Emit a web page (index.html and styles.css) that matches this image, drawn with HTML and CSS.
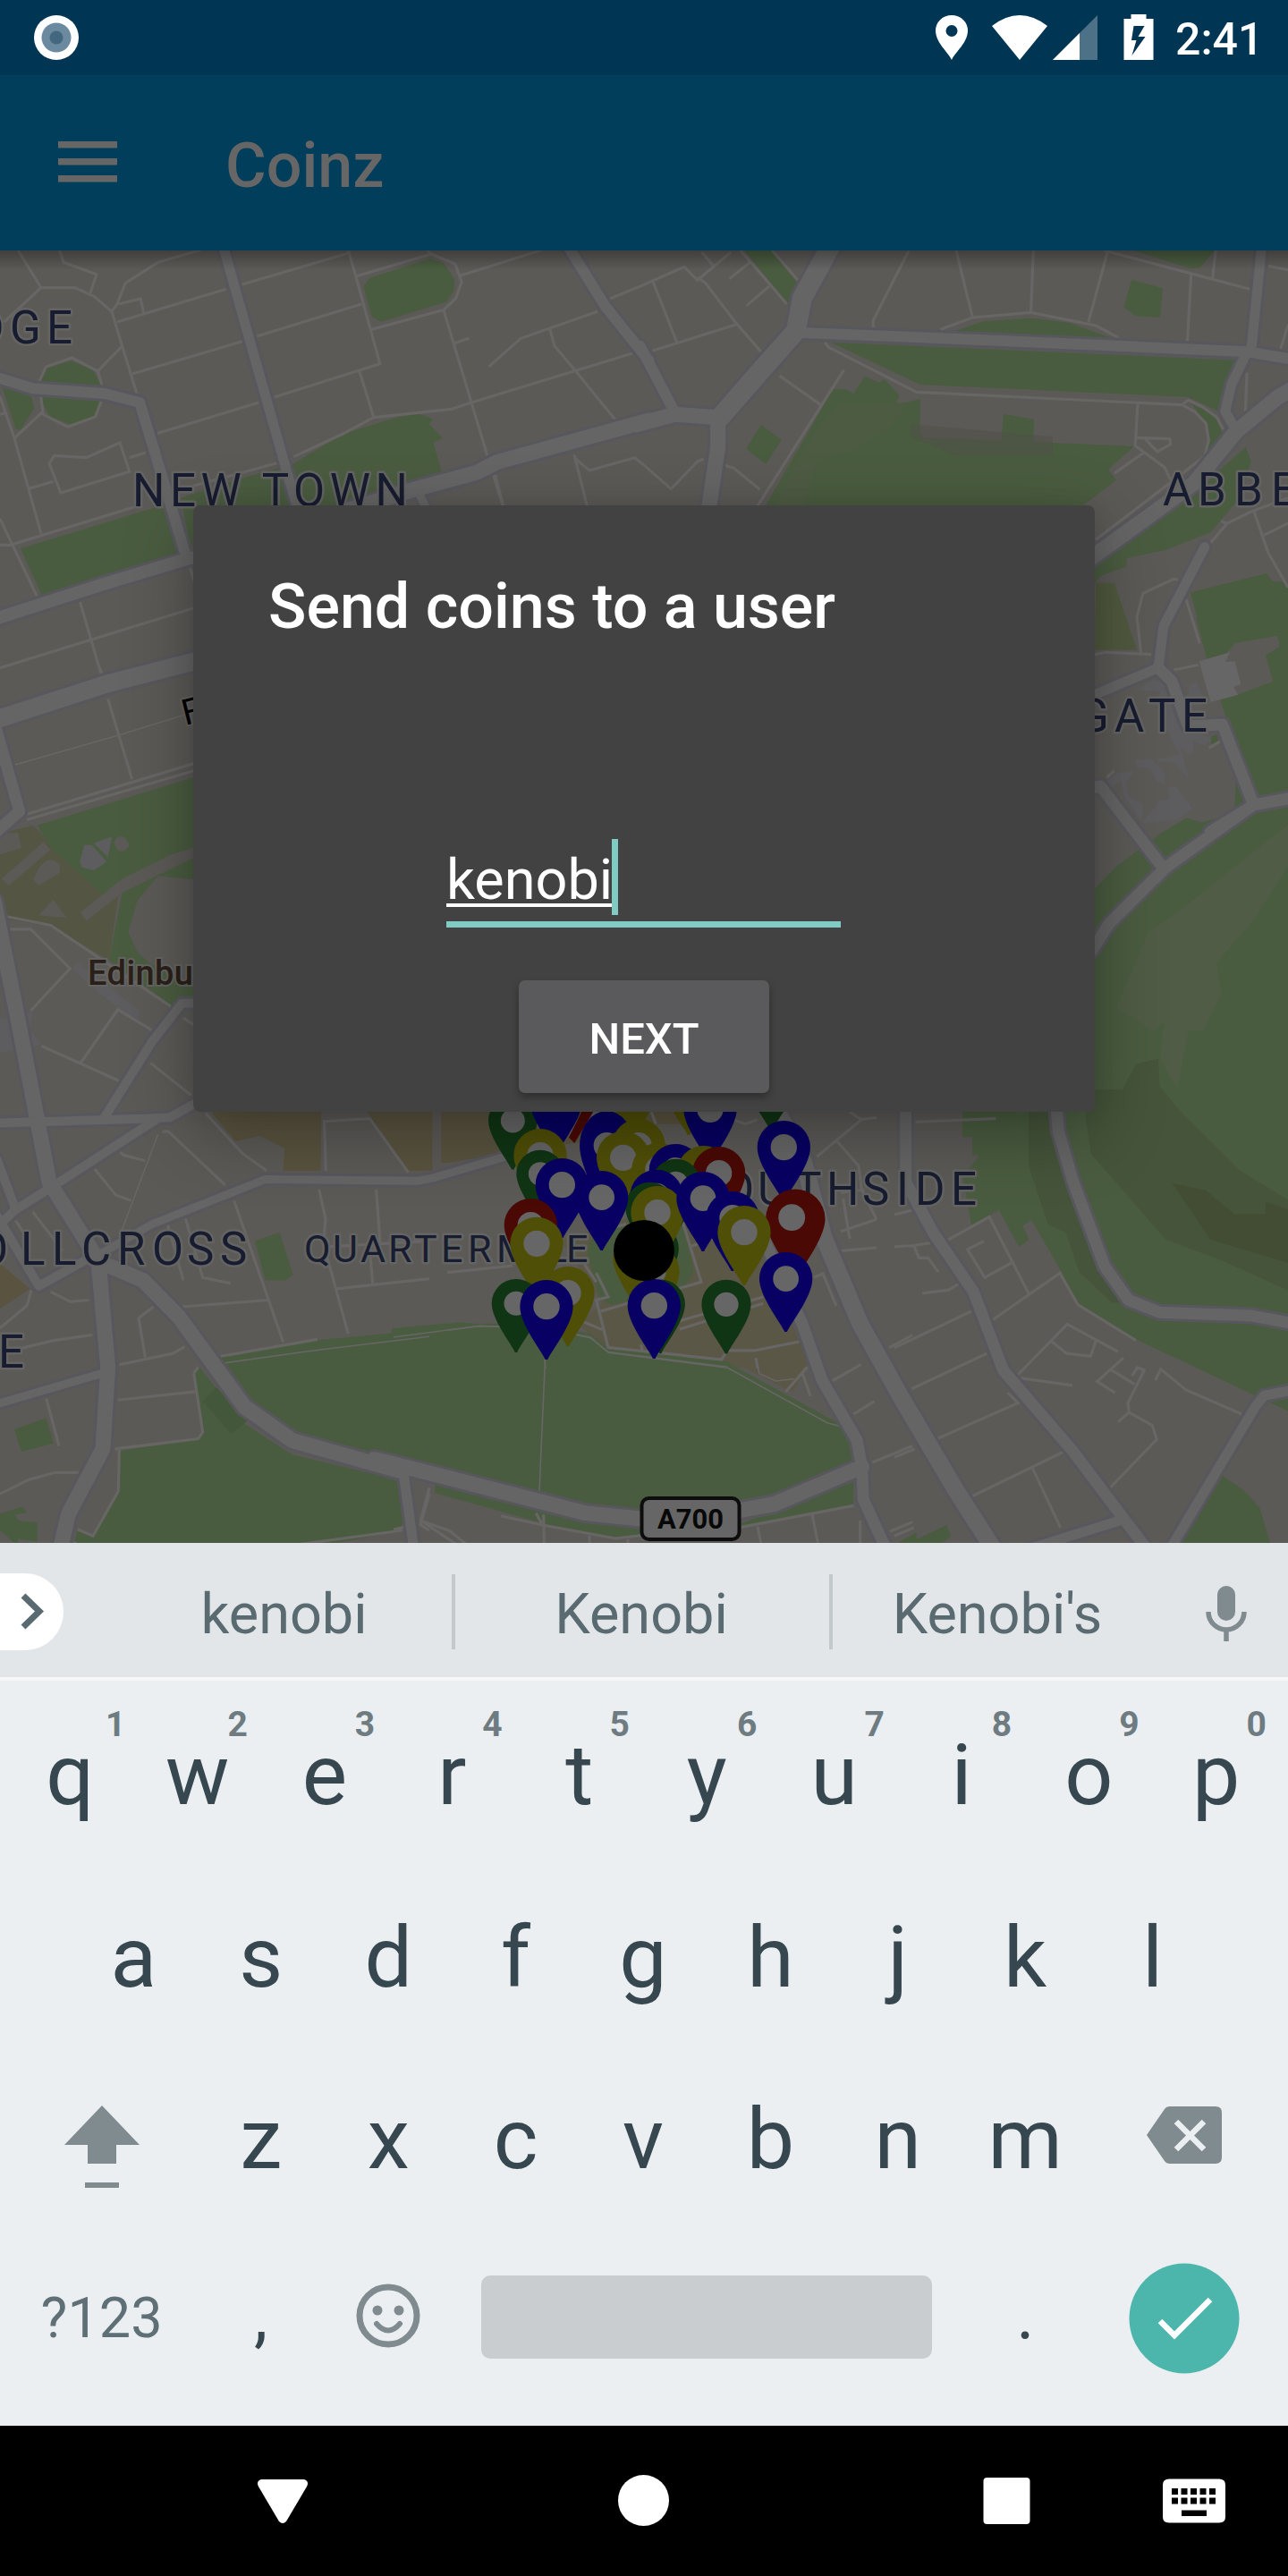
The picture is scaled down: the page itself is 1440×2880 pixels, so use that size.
FILE: index.html
```html
<!DOCTYPE html>
<html lang="en">
<head>
<meta charset="utf-8">
<title>Coinz</title>
<link rel="stylesheet" href="styles.css">
</head>
<body>
<div class="phone">
  <header class="status">
    <svg width="50" height="50" viewBox="0 0 50 50"><circle cx="25" cy="25" r="25" fill="#fff"/><circle cx="25" cy="25" r="16.5" fill="#6b8a9f"/><circle cx="25" cy="25" r="7.5" fill="#43677f"/></svg>
    <div class="status-right">
      <svg width="230" height="54" viewBox="1046 15 230 54" fill="#fff">
        <path fill-rule="evenodd" d="M1064 67C1060 58 1046 48 1046 34A18 17 0 0 1 1082 34C1082 48 1068 58 1064 67ZM1064 28a6.5 6.5 0 1 0 0 13a6.5 6.5 0 0 0 0-13Z"/>
        <path d="M1109 29Q1140 5 1171 29L1140 67Z"/>
        <path d="M1227 17V67H1177Z" opacity=".3"/><path d="M1207 37V67H1177Z"/>
        <path fill-rule="evenodd" d="M1265 16h17v5h8v46h-33V21h8ZM1268 29L1265.500 45H1271L1266 62L1281 41H1273L1280 29Z" transform="translate(-.5)"/>
      </svg>
      <span class="clock">2:41</span>
    </div>
  </header>
  <div class="appbar">
    <svg width="66" height="48" viewBox="0 0 66 48" fill="#666"><path d="M0 1h66v7.500H0zM0 20h66v7.500H0zM0 39h66v7.500H0z"/></svg>
    <h1>Coinz</h1>
  </div>
  <main class="stage">
    <svg class="map" width="1440" height="1445" viewBox="0 280 1440 1445">
      <defs>
        <g id="roads">
          <g transform="translate(0 270) scale(.4592 .3333)">
            <path class="w11" d="M540 0L700 780L730 920"/>
            <path class="w12" d="M-10 455L80 493L255 510L340 540L395 790L455 1065"/>
            <path class="w14" d="M-10 1265L250 1150L455 1065L490 1055"/>
            <path class="w12" d="M1380 10L1475 220L1580 400"/>
            <path class="w17" d="M850 900L1000 835L1160 775L1210 740L1580 600"/>
            <path class="w9" d="M1022 850L1050 930"/>
          </g>
          <g transform="translate(720 270) scale(.4592 .3333)">
            <path class="w22" d="M460 0L425 90L385 190L370 300L280 440L185 590"/>
            <path class="w17" d="M-20 615L75 580L180 590L180 690L155 920"/>
            <path class="w12" d="M370 305L820 330L1470 370L1590 398"/>
            <path class="w11" d="M1505 0L1478 370M1465 380L1430 480L1415 570L1440 630"/>
            <path class="w17" d="M1590 485L1545 520L1440 640L1340 810L1080 1070"/>
            <path class="w12" d="M-10 350L70 560"/>
            <path class="w11" d="M1365 1025L1265 1290L1252 1430L1080 1530"/>
          </g>
          <g transform="translate(1200 700) scale(.3333)">
            <path class="w13" d="M285 140L330 185L385 335L500 330L605 600L740 575M605 600L460 690"/>
          </g>
          <g transform="translate(1000 750) scale(.3333 .6281)">
            <path class="w13" d="M1200 240L910 350L720 450L660 500M900 350L690 205L650 210"/>
            <path class="w13" d="M540 760L550 820L600 910L705 1060L785 1120L890 1142L1200 1148L1340 1162"/>
            <path class="w13" d="M38 700L38 910L130 1000L265 1105L365 1245L600 1390L770 1510L900 1600"/>
            <path class="w11" d="M380 1575L770 1510"/>
            <path class="w11" d="M900 1585L1210 1310L1240 1290L1340 1280"/>
          </g>
          <g transform="translate(0 750) scale(.3333 .6281)">
            <path class="w20" d="M-20 88L365 22L660 -18"/>
            <path class="w13" d="M-20 90L65 250L-10 285"/>
            <path class="w17" d="M-20 410L60 620L165 910L330 1050L362 1240L345 1385L230 1500L190 1590"/>
            <path class="w10" d="M-10 805L500 797L570 795L660 768M170 920L520 800M170 920L50 960L-10 990M-10 870L50 955"/>
            <path class="w10" d="M350 795L510 660L610 592L660 592M-10 970L130 1095L300 1045"/>
            <path class="w9" d="M330 1040L510 985L890 905L1400 908L1450 903L1790 850L2100 760"/>
            <path class="w17" d="M370 1060L480 1085L600 1150L820 1310L980 1370L1340 1424"/>
            <path class="w9" d="M345 1250L-10 1305"/>
          </g>
          <g transform="translate(440 1480) scale(.37 .3333)">
            <path class="w17" d="M-60 455L0 470L580 635L750 655L900 655L1150 605L1415 480"/>
            <path class="w11" d="M30 500L62 760"/>
            <path class="w13" d="M1030 -500L1235 0L1295 190L1400 390L1415 480L1420 590L1490 760"/>
            <path class="w19" d="M1120 -800L1240 -540L1300 -290L1410 0L1530 240L1700 560L1850 820"/>
          </g>
        </g>
        <path id="pin" d="M-4 178C-15 150 -89 60 -89 0A89 89 0 1 1 89 0C89 60 15 150 4 178Z"/>
        <linearGradient id="barShade" x2="0" y2="1"><stop stop-opacity=".3"/><stop offset="1" stop-opacity="0"/></linearGradient>
      </defs>
      <rect y="280" width="1440" height="1445" fill="#5c5a57"/>

      <g class="park">
        <g transform="translate(0 270) scale(.4592 .3333)">
          <path d="M900 122L1048 58L1080 72L1107 125L1105 165L1088 202L928 270L905 252L885 150ZM172 400L225 430L245 480V545L230 588L172 613L122 588L95 520L100 465L115 425ZM5 488L75 515L83 560L50 632L38 628ZM50 1030L395 885L435 1050L102 1188ZM440 860L600 790L715 745L835 645L970 588L1020 578L1055 595L1045 612L1078 660L1055 675L1078 785L850 900H480V1050L460 1000Z"/>
        </g>
        <g transform="translate(720 270) scale(.4592 .3333)">
          <path d="M245 30H310L372 135L350 210ZM1190 30H1390L1352 90H1330ZM1187 128L1263 157L1257 255L1197 250L1168 220ZM755 302L825 268L940 257L1035 272L1140 325ZM455 338L1440 398L1415 470L1400 570L1325 522L672 480ZM1335 545L1390 580L1413 660L1360 750L1375 670L1365 610ZM285 615L335 665L297 747L248 695ZM460 495H490L510 510L538 452L572 473L585 462L622 515L612 548L672 528V640L680 657L870 668L875 578L950 597L948 672L1193 687L1130 765L1150 800L1055 900H290ZM1465 690L1478 740L1450 860L1380 975L1270 1035L1175 1062V1090L1115 1120L1080 1170V1110L1290 900ZM1330 1177L1517 1113L1530 1140L1580 1145V1520L1400 1510L1375 1395Z"/>
          <path fill="#50593f" d="M1100 1145H1145L1200 1370H1098Z"/>
          <path fill="#4e5b43" d="M470 550L410 655L350 800L320 885H390L420 740L520 690L600 620L640 540Z"/>
          <path fill="#505049" opacity=".55" d="M648 612L995 655V717H755L648 655Z"/>
        </g>
        <path d="M1337 690H1440V890L1404 900L1372 806L1350 740Z"/>
        <g transform="translate(1000 750) scale(.3333 .6281)">
          <path d="M660 395L740 350L820 318L890 290L980 262L1030 270L1140 255L1145 200L1200 230H1330V1320L1210 1290L810 1190L610 1125L560 1070L460 978L430 988L452 1013L417 1025L350 960L258 987L230 900L285 862H262L260 830H228V780H660ZM910 1570L1100 1432L1175 1460L1225 1490L1270 1570ZM0 1565L175 1520L190 1540L120 1570Z"/>
          <path fill="#505c45" d="M745 600L850 465L950 430L1245 305L1330 270V340L1245 410L1210 440L1080 520L1097 575L1035 640L985 640L950 745L890 690L905 625L870 642Z"/>
          <path fill="#45543a" d="M672 745H765L810 700L885 690L890 740L970 790L1160 890L1330 945V1105L1100 1050L910 1012L660 860L640 790ZM450 785V880L515 985L575 1000L620 1070L730 1125H770L700 1065L590 910L530 785Z"/>
          <path fill="#43492f" opacity=".6" d="M932 912L1045 925L1140 967H1245V945L1330 960V1055L1060 1012Z"/>
        </g>
        <g transform="translate(0 750) scale(.3333 .6281)">
          <path fill="#54543f" opacity=".8" d="M-5 290L110 275L345 395L400 390L365 515L170 455L0 440Z"/>
          <path d="M125 275L660 188V313L570 328L410 370L345 398L175 318ZM410 395L660 328V580L580 597L365 515ZM855 1015L938 1000L983 1075L958 1085H890ZM740 1222L1050 1192L1450 1172V1430L990 1370L840 1300ZM650 1250L670 1240L820 1340L980 1395L1335 1440L1350 1530L960 1570H240L260 1530L310 1540L400 1460L405 1388L668 1368L680 1355ZM48 1350L155 1330L180 1375L72 1390ZM0 1500L75 1488L90 1498L50 1502L60 1512L125 1516V1550L60 1545V1558L0 1530Z"/>
          <path fill="#5c5a57" d="M660 372L530 365L460 410L430 465L460 500L500 520L580 545L660 560ZM5 370L145 305L170 318L30 382ZM112 372Q150 320 200 345V360L130 382ZM270 430L345 398L660 315V330L410 395L290 445ZM-5 290L60 288L72 315L-5 328ZM130 435L178 407L225 440Z"/>
          <path fill="#43583a" d="M680 1300L725 1275L830 1335L775 1358Z"/>
          <path fill="#5d5d60" d="M268 340L283 310H308L358 340L315 355L275 350ZM315 307L375 295L362 332ZM240 530L262 520L468 605L455 625L325 570ZM0 620L112 605L100 640L140 665L0 680Z"/>
          <path fill="#5c5a57" d="M382 306Q405 280 435 310Q405 335 382 306Z"/>
          <path fill="#59533f" d="M700 780H1078L1075 890H950L955 850L870 828L790 838ZM1225 780H1450V890H1370ZM0 1055L100 1100L0 1135Z"/>
        </g>
        <g transform="translate(500 1220) scale(.3333)">
          <path fill="#59533f" d="M-20 60H960V95L860 110L600 110L450 170L0 240H-20Z"/>
          <path fill="#5b5747" d="M380 500L620 420L1020 460L1100 640L1210 910L1160 1010L1000 930L530 870L440 780L520 710Z"/>
          <path d="M480 500L560 450L790 440L827 605L800 650L550 718L510 690L470 540ZM-20 785L180 778L400 800L480 812L540 860L940 905L1000 960H-20Z"/>
        </g>
        <g transform="translate(440 1480) scale(.37 .3333)">
          <path d="M-5 15L200 -5L560 30L650 90L1010 130L1355 340L1395 455L1140 580L750 640L580 620L-5 455ZM-5 495L15 510L30 670L-5 678ZM125 540L440 620L580 660L750 685V708L670 715L520 690L125 568ZM1050 670L1390 530V605L1050 685ZM1515 740L1580 700V740Z"/>
        </g>
        <g transform="translate(1200 700) scale(.3333)">
          <path fill="#5c5a57" d="M543 57L685 32L692 68L645 98L670 185L540 235L460 255L422 118L510 95Z"/>
          <path fill="#666" d="M422 118L525 88L510 120L542 118L562 195L537 205L553 230L460 255Z"/>
          <path fill="#5d5d60" d="M210 215L270 180L300 190L350 330L410 350L465 380L440 400L400 385L405 425L385 430L360 405L390 520L345 460L265 450L355 430L310 340L290 220ZM385 235L388 200L415 185L430 235ZM112 520Q150 480 205 488L180 520L185 570L235 600L230 655L170 570L160 520L125 540ZM205 450L258 445L300 480L310 530L275 520L260 480L215 470ZM318 540L345 540L400 610L350 650L230 660L290 585L340 575L325 590Z"/>
          <path d="M463 370L480 362L490 388L462 402Z"/>
        </g>
      </g>

      <g class="minor">
        <g transform="translate(0 270) scale(.4592 .3333)">
          <path d="M35 10L100 155H182L230 185L272 235L335 520M145 30L155 70L235 110L218 180M100 155L10 270M490 28L385 70L305 140L285 210L272 235M288 210L342 192L350 240M285 270L550 160M588 145L850 38M320 445L590 335M625 318L880 210M668 522L925 410L865 110L848 30M380 645L630 540M875 435L910 590L1100 562L1148 540L1540 375M715 722L835 645L910 590M865 118L1050 42L1108 75L1124 135L1110 190L1080 230L905 295M1120 115L1320 28M1080 230L1188 725L1225 890M1105 342L1142 325M1190 420L1268 325L1455 235M1338 290L1350 350L1400 432L1498 598M1485 192L1568 145M298 350L238 435L175 390L112 420L95 470L105 580L165 622L232 588L248 530M238 435L248 480M105 570L35 660L0 520M35 660L100 980M72 828L130 805M315 725L355 708M120 745L132 718L210 725L292 675L315 772L148 843ZM0 580L12 575M0 1018H25L340 885M0 930L90 1190M470 820L710 730M195 1210L247 1455M0 1430L470 1230M463 1095L475 1150M1398 715L1430 890M1398 725L1435 768L1545 725L1568 750M1205 780L1225 885M1040 30L1050 42"/>
        </g>
        <g transform="translate(720 270) scale(.4592 .3333)">
          <path d="M0 145L98 85L130 130L212 35M140 35L168 80M22 135L82 345M20 367L225 278M130 120L150 140L225 275L285 370M235 30L348 210M312 30L375 130M208 125L258 70M250 215L305 150M645 30L558 265V290M760 30L800 255M948 30L942 238M722 295L800 255L942 238L1100 282L1155 322M1128 38L1082 270M1120 30L1475 160M1332 112L1323 335M1392 30L1384 125M1520 82L1568 95M1568 280L1550 360M440 338L450 355L663 505L1310 548L1340 570L1368 610L1375 665L1365 720L1290 800L1100 1000M1310 548L1325 532L1360 555L1395 590L1410 630M1202 545L1196 685L1268 758L1282 800M1217 708L1145 778M1198 658L1280 662L1282 680L1250 705L1220 662M330 450L430 548M487 430L275 890M190 748L218 760L282 832M0 750L66 830L130 738L145 730M1468 440L1464 580M1568 860L1480 905L1420 945L1380 1010M1405 938L1420 945M1485 905L1520 1045L1568 1160M1510 985L1568 945M1300 1135L1290 1132L1215 1180L1200 1260L1210 1380M1098 1385L1125 1378L1235 1385M1290 1437L1350 1420M1320 1200L1353 1348"/>
        </g>
        <g transform="translate(0 750) scale(.3333 .6281)">
          <path d="M335 -5L345 10M362 50L443 193M90 255L650 165M90 265L650 178M0 435L170 453L580 600M22 460H103L235 530L103 605M395 603L272 697M140 668L400 730M272 697L395 603L510 640M505 698L640 755M615 618L650 630M545 820H565L755 915M690 788L815 860L895 890M1093 890L1088 802L1240 797L1370 893M403 857L415 862L487 872M318 887L388 933L440 943M110 963L210 1032M52 978L98 1015M563 987L615 1085M622 975L680 1080L773 1090M785 943L950 1195M1070 923L1092 975L1085 1020L1168 1180M1262 923L1275 1020M1240 1030L1250 1090M1130 1100L1440 1082M1100 1025L1440 1015M515 1132L465 1152L487 1222M610 1132L900 1120M400 1235L580 1215L620 1203M395 1298L655 1283M170 1105L235 1123L298 1120M105 1103L90 1130L0 1170M0 1215L180 1192L310 1182M155 1295L198 1380M0 1465L95 1440L185 1427H270M650 1250L680 1355L665 1367L385 1385M400 1385L397 1460L312 1540L260 1528M740 1220L1065 1190M650 1250L665 1240M1440 1465L1410 1520L1440 1530M960 1558L1350 1530M250 1550L265 1570"/>
          <path class="hair" d="M0 175L395 115L640 75M395 1015L530 825M740 1233L1050 1210L1440 1185"/>
        </g>
        <g transform="translate(500 1220) scale(.3333)">
          <path d="M685 70L700 110M960 95L1000 110L1040 95M1350 70L1390 95L1305 165L1240 220M1390 95L1440 88M1305 165L1380 250L1390 330L1440 430M1320 340L1400 330M1320 470L1440 430M1328 360L1350 495M1320 535L1440 525M1230 625L1260 612L1305 720M790 440L852 640L515 738M500 610L540 690L500 700L540 860L920 900L940 870H1030L1180 840M780 770L1060 690M780 798L1060 712M460 775L520 800M500 640L460 580M600 445L520 470M820 520L900 490M0 608L220 585M1035 895L1042 930M650 850L655 870"/>
          <path class="hair" d="M0 802L105 788L300 790L480 825L540 875L940 925M327 900L330 930"/>
        </g>
        <g transform="translate(1000 750) scale(.3333 .6281)">
          <path d="M70 803L340 797M0 968L60 960M0 1025L65 1023L180 1013L318 972L450 1108M65 1023L82 1045H113L147 1070M300 1015L245 1030L303 1080L398 1052M93 1108L182 1102L230 1087M330 1155L555 1072L615 1128L810 1192M0 1205L258 1140M58 1278L310 1215M138 1368L415 1303L380 1285M0 1400L68 1385M230 1477L568 1390M462 1418L557 1525M410 1255L580 1163L750 1212M525 1193L578 1215L658 1220L677 1190M410 1258L597 1272M768 1223L680 1265L740 1285M723 1243L805 1270M797 1255L815 1240L838 1245L783 1303L787 1320L750 1337M787 1320L865 1343L880 1368L722 1455M875 1263L893 1243L978 1280L1165 1323M0 1540L65 1525M712 190L737 178M1055 137L1095 125"/>
        </g>
        <g transform="translate(440 1480) scale(.37 .3333)">
          <path d="M1320 195L1412 137M1390 303L1453 260M1447 465L1568 410M1498 80L1568 38M1500 697L1568 665M1185 228L1250 145M1235 165L1260 243M1050 682L1390 610M1100 680L1110 735M1265 640L1282 735M1410 660V735M108 550L82 660L170 695L220 740M82 660L190 740M325 645L450 675L670 720L750 710M430 635L450 675M453 640L455 735M592 710V735M708 722V735M0 690L30 683"/>
          <path class="hair" d="M0 45L260 7L320 10M555 38L595 47L650 97L1010 148L1310 332L1355 345M458 120L440 575M1095 115L1105 167L1155 192L1210 185"/>
        </g>
      </g>

      <use class="casing" href="#roads"/>
      <use class="surface" href="#roads"/>

      <g class="place">
        <text x="-29 11 52" y="384">DGE</text>
        <text x="148" y="566" textLength="308">NEW TOWN</text>
        <text x="1300 1339 1380 1421" y="565">ABBE</text>
        <text x="1205 1246 1284 1321" y="818">GATE</text>
        <text x="774 808 847 888 924 964 1002 1023 1063" y="1347">SOUTHSIDE</text>
        <text x="-26 23 58 91 131 170 209 246" y="1414">OLLCROSS</text>
        <text class="small" x="340 372 403 434 463 493 523 555 595 611 633" y="1411">QUARTERMILE</text>
        <text x="-2" y="1529">E</text>
      </g>
      <text class="castle" x="98" y="1101" textLength="118">Edinbu</text>
      <text class="street" transform="translate(207 811) rotate(-14)">F</text>
      <g><rect x="717.500" y="1675" width="109" height="46" rx="8" fill="#666" stroke="#0d0d0d" stroke-width="4"/><text class="shield" x="735" y="1708.500" textLength="74" lengthAdjust="spacingAndGlyphs">A700</text></g>

      <g class="pins" transform="translate(500 1220) scale(.3333)">
        <g class="g" transform="translate(220 99) scale(.92)"><use href="#pin"/><circle r="44"/></g>
        <g class="b" transform="translate(365 30)"><use href="#pin"/></g>
        <g class="r"><path d="M455 60H495L427 174L408 155Z"/></g>
        <g class="y" transform="translate(600 20)"><use href="#pin"/></g>
        <g class="y" transform="translate(810 -31)"><use href="#pin"/></g>
        <g class="g" transform="translate(1087 -35) scale(.93)"><use href="#pin"/></g>
        <g class="b" transform="translate(882 61)"><use href="#pin"/><circle r="44"/></g>
        <g class="b" transform="translate(1129 188)"><use href="#pin"/><circle r="44"/></g>
        <g class="y" transform="translate(312 215)"><use href="#pin"/><circle r="44"/></g>
        <g class="g" transform="translate(312 277) scale(.9)"><use href="#pin"/><circle r="44"/></g>
        <g class="b" transform="translate(535 182) scale(1.02 1.3)"><use href="#pin"/></g>
        <g class="b" transform="translate(535 182)"><circle r="44"/></g>
        <g class="y" transform="translate(642 182)"><use href="#pin"/><circle r="44"/></g>
        <g class="y" transform="translate(590 223)"><use href="#pin"/><circle r="44"/></g>
        <g class="y" transform="translate(708 262)"><use href="#pin"/><circle r="44"/></g>
        <g class="b" transform="translate(766 266)"><use href="#pin"/><circle r="44"/></g>
        <g class="y" transform="translate(860 272)"><use href="#pin"/></g>
        <g class="r" transform="translate(911 275)"><use href="#pin"/><circle r="44"/></g>
        <g class="g" transform="translate(767 310) scale(.93)"><use href="#pin"/><circle r="44"/></g>
        <g class="b" transform="translate(702 352)"><use href="#pin"/><circle r="44"/></g>
        <g class="g" transform="translate(680 388) scale(.93)"><use href="#pin"/></g>
        <g class="b" transform="translate(385 314)"><use href="#pin"/><circle r="44"/></g>
        <g class="b" transform="translate(518 356)"><use href="#pin"/><circle r="43"/></g>
        <g class="g" transform="translate(692 528) scale(.95)"><use href="#pin"/></g>
        <g class="y" transform="translate(645 560)"><use href="#pin"/></g>
        <g class="y" transform="translate(690 605)"><use href="#pin"/><circle r="44"/></g>
        <g class="y" transform="translate(705 407)"><use href="#pin"/><circle r="44"/></g>
        <g class="b" transform="translate(858 359)"><use href="#pin"/><circle r="43"/></g>
        <g class="b" transform="translate(957 425)"><use href="#pin"/><circle r="44"/></g>
        <g class="r" transform="translate(1168 428) scale(1.12)"><use href="#pin"/><circle cx="-11" cy="-4" r="40"/></g>
        <g class="y" transform="translate(996 473)"><use href="#pin"/><circle r="44"/></g>
        <g class="r" transform="translate(280 449)"><use href="#pin"/><circle r="44"/></g>
        <g class="y" transform="translate(300 511)"><use href="#pin"/><circle r="44"/></g>
        <g class="g" transform="translate(231 712) scale(.92)"><use href="#pin"/><circle r="44"/></g>
        <g class="y" transform="translate(405 677)"><use href="#pin"/><circle r="44"/></g>
        <g class="b" transform="translate(333 722)"><use href="#pin"/><circle r="44"/></g>
        <g class="g" transform="translate(715 714) scale(.93)"><use href="#pin"/></g>
        <g class="b" transform="translate(694 719)"><use href="#pin"/><circle r="44"/></g>
        <g class="g" transform="translate(936 715) scale(.93)"><use href="#pin"/><circle r="44"/></g>
        <g class="b" transform="translate(1136 629)"><use href="#pin"/><circle r="43"/></g>
      </g>
      <circle cx="720" cy="1398" r="34"/>
      <rect y="280" width="1440" height="22" fill="url(#barShade)"/>
    </svg>

    <section class="dialog">
      <h2>Send coins to a user</h2>
      <div class="field"><span class="typed">kenobi</span><i class="cursor"></i></div>
      <button class="next">NEXT</button>
    </section>
  </main>

  <section class="keyboard">
    <div class="suggest">
      <span class="more"><svg width="28" height="42" viewBox="0 0 28 42" fill="none" stroke="#5a6a71" stroke-width="7"><path d="M3 3L21 20.500L3 38"/></svg></span>
      <span class="word w-first">kenobi</span><i></i><span class="word w-mid">Kenobi</span><i></i><span class="word w-last">Kenobi's</span>
      <svg class="mic" width="46" height="62" viewBox="0 0 46 62"><rect x="13" width="20" height="39" rx="10" fill="#808b8f"/><path d="M3 29A20 20 0 0 0 43 29M23 49V62" fill="none" stroke="#808b8f" stroke-width="5.500"/></svg>
    </div>
    <div class="keys">
      <div class="row top">
        <b>q<sup class="one">1</sup></b><b>w<sup>2</sup></b><b>e<sup>3</sup></b><b>r<sup>4</sup></b><b>t<sup>5</sup></b><b>y<sup>6</sup></b><b>u<sup>7</sup></b><b>i<sup>8</sup></b><b>o<sup>9</sup></b><b>p<sup>0</sup></b>
      </div>
      <div class="row"><b>a</b><b>s</b><b>d</b><b>f</b><b>g</b><b>h</b><b>j</b><b>k</b><b>l</b></div>
      <div class="row">
        <span class="wide shift"><svg width="86" height="94" viewBox="0 0 86 94" fill="#808b8f"><path d="M43 0L85 44H59V65H27V44H1ZM24 86H62V92H24Z"/></svg></span>
        <b>z</b><b>x</b><b>c</b><b>v</b><b>b</b><b>n</b><b>m</b>
        <span class="wide erase"><svg width="84" height="64" viewBox="0 0 84 64"><path d="M26 0H77Q84 0 84 7V57Q84 64 77 64H26Q22 64 20 61L0 32L20 3Q22 0 26 0Z" fill="#808b8f"/><path d="M33 17L64 48M64 17L33 48" stroke="#ebeff2" stroke-width="6.500"/></svg></span>
      </div>
      <div class="row">
        <span class="wide sym">?123</span>
        <b class="dot">,</b>
        <b><svg width="72" height="72" viewBox="0 0 72 72"><circle cx="36" cy="36" r="32" fill="none" stroke="#808b8f" stroke-width="7"/><circle cx="24" cy="30" r="5.500" fill="#808b8f"/><circle cx="48" cy="30" r="5.500" fill="#808b8f"/><path d="M23 45Q36 60 49 45" fill="none" stroke="#808b8f" stroke-width="6" stroke-linecap="round"/></svg></b>
        <span class="space"></span>
        <b class="dot">.</b>
        <span class="wide done"><svg width="124" height="124" viewBox="0 0 124 124"><circle cx="62" cy="62" r="61.500" fill="#4db6ac"/><path d="M35 65L51 81L91 41" fill="none" stroke="#fff" stroke-width="6.500"/></svg></span>
      </div>
    </div>
  </section>

  <nav class="navbar">
    <svg width="1440" height="168" viewBox="0 2712 1440 168" fill="#fff">
      <path d="M292 2772H340Q346 2774 343 2780L320 2819Q316 2823 312 2819L289 2780Q286 2774 292 2772Z"/>
      <circle cx="719.500" cy="2795.500" r="28.500"/>
      <rect x="1099.500" y="2770" width="52" height="52" rx="4"/>
      <path fill-rule="evenodd" d="M1307 2771.500H1363Q1370 2771.500 1370 2778V2814Q1370 2820.500 1363 2820.500H1307Q1300 2820.500 1300 2814V2778Q1300 2771.500 1307 2771.500ZM1310 2782V2789H1317V2782ZM1320.500 2782V2789H1327.500V2782ZM1331 2782V2789H1338V2782ZM1341.500 2782V2789H1348.500V2782ZM1352 2782V2789H1359V2782ZM1310 2792.500V2799.500H1317V2792.500ZM1320.500 2792.500V2799.500H1327.500V2792.500ZM1331 2792.500V2799.500H1338V2792.500ZM1341.500 2792.500V2799.500H1348.500V2792.500ZM1352 2792.500V2799.500H1359V2792.500ZM1321 2806.500V2813H1349V2806.500Z"/>
    </svg>
  </nav>
</div>
</body>
</html>
```
FILE: styles.css
```css
* { box-sizing: border-box; }
body { margin: 0; font-family: Roboto, sans-serif; }
h1, h2 { margin: 0; font-size: 70px; line-height: 82px; font-weight: 500; }
svg { display: block; flex: none; }

.phone { width: 1440px; height: 2880px; display: flex; flex-direction: column; overflow: hidden; }

.status { height: 84px; padding: 0 36px 0 38px; display: flex; align-items: center; justify-content: space-between; background: #003653; }
.status-right { display: flex; align-items: center; }
.status-right svg { overflow: visible; }
.clock { width: 90px; margin-left: 38px; font-size: 50px; line-height: 84px; padding-top: 3px; font-weight: 500; color: #fff; white-space: nowrap; }

.appbar { height: 196px; padding: 0 65px; display: flex; align-items: center; gap: 121px; background: #003e5b; color: #666; }
.appbar svg { margin-top: -3px; }
.appbar h1 { padding-top: 6px; }

.stage { height: 1445px; position: relative; overflow: hidden; }
.park { fill: #4a5c40; }
.map path { vector-effect: non-scaling-stroke; }
.minor { fill: none; stroke: #676665; stroke-width: 3.2px; }
.minor .hair { stroke-width: 1.6px; }
.casing, .surface { fill: none; stroke-linejoin: round; stroke-linecap: round; }
.casing { stroke: #57575d; --edge: 6px; }
.surface { stroke: #656565; --edge: 0px; }
.w9 { stroke-width: calc(9px + var(--edge)); }
.w10 { stroke-width: calc(10px + var(--edge)); }
.w11 { stroke-width: calc(11px + var(--edge)); }
.w12 { stroke-width: calc(12px + var(--edge)); }
.w13 { stroke-width: calc(13px + var(--edge)); }
.w14 { stroke-width: calc(14px + var(--edge)); }
.w17 { stroke-width: calc(17px + var(--edge)); }
.w19 { stroke-width: calc(19px + var(--edge)); }
.w20 { stroke-width: calc(20px + var(--edge)); }
.w22 { stroke-width: calc(22px + var(--edge)); }

.place text { font-size: 51px; fill: #181c30; stroke: #646462; stroke-width: 5px; paint-order: stroke; stroke-linejoin: round; }
.place .small { font-size: 43px; }
.castle { font-size: 38px; font-weight: 500; fill: #2a2019; stroke: #646462; stroke-width: 4px; paint-order: stroke; }
.street { font-size: 40px; stroke: #646462; stroke-width: 4px; paint-order: stroke; }
.shield { font-size: 31px; font-weight: 700; fill: #080808; }

.pins circle { fill: #666; }
.g { fill: #103514; }
.b { fill: #080063; }
.y { fill: #504f07; }
.r { fill: #4a0905; }

.dialog { position: absolute; left: 216px; top: 285px; width: 1008px; height: 678px; padding: 72px 84px 0; display: flex; flex-direction: column; border-radius: 8px; background: #424242; color: #fff; box-shadow: 0 24px 80px rgba(0, 0, 0, .3), 0 0 24px rgba(0, 0, 0, .08); }
.field { width: 441px; height: 99px; margin: 219px 0 0 199px; display: flex; align-items: flex-start; border-bottom: 7px solid #80cbc4; }
.typed { height: 76px; border-bottom: 4px solid #fff; font-size: 63px; line-height: 91px; }
.cursor { width: 7px; height: 85px; margin-left: -1px; background: #80cbc4; }
.next { width: 280px; height: 126px; margin: 59px 0 0 280px; padding: 4px 0 0; border: 0; border-radius: 7px; background: #5a5a5c; color: #fff; font: 500 49px Roboto, sans-serif; box-shadow: 0 5px 8px rgba(0, 0, 0, .3); }

.keyboard { height: 987px; background: #ebeff2; color: #37474f; }
.suggest { height: 154px; padding: 4px 46px 0 0; display: flex; align-items: center; background: #e2e6e9; border-bottom: 4px solid #f5f7f8; }
.suggest i { width: 4px; height: 84px; background: #c3c8cb; }
.more { width: 71px; height: 86px; padding-left: 23px; display: flex; align-items: center; background: #fff; border-radius: 0 43px 43px 0; }
.word { padding-top: 6px; text-align: center; font-size: 63px; line-height: 74px; color: #5a6a71; }
.w-first { width: 434px; padding-left: 59px; }
.w-mid { width: 418px; padding-right: 2px; }
.w-last { width: 368px; margin-right: 49px; }
.mic { margin-top: 4px; }

.keys { padding: 4px 8px 0 6px; }
.row { height: 203.400px; display: flex; justify-content: center; align-items: center; }
.row b { position: relative; width: 142.400px; display: flex; justify-content: center; font-size: 95px; line-height: 203px; font-weight: 400; }
.row sup { position: absolute; left: 105px; top: 22px; font-size: 39px; line-height: 46px; font-weight: 700; color: #6e7c82; }
.row .one { left: 111px; }
.wide { width: 213.600px; display: flex; justify-content: center; }
.shift { padding-top: 20px; }
.erase { padding-bottom: 9px; }
.done { padding-bottom: 5px; }
.sym { font-size: 63px; color: #5f6f76; padding-bottom: 6px; }
.row .dot { font-size: 77px; padding-bottom: 10px; }
.row b svg { margin-top: -12px; }
.space { width: 504px; height: 93px; margin: 0 33px; border-radius: 10px; background: #c9cdd0; margin-top: -8px; }

.navbar { height: 168px; background: #000; }
```
